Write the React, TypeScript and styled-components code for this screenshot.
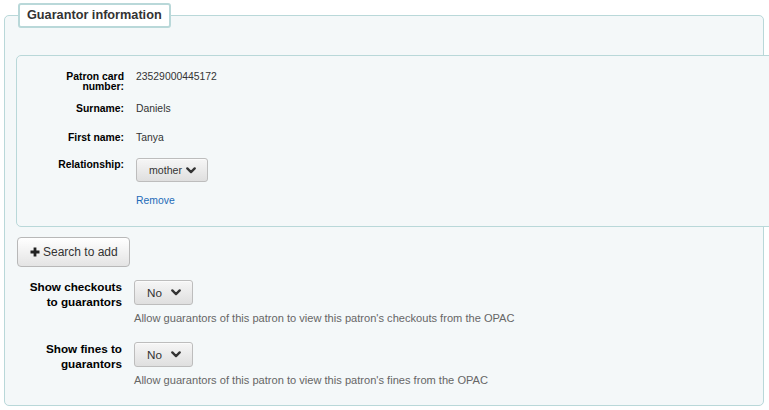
import React from "react";
import styled, { createGlobalStyle } from "styled-components";

const GlobalStyle = createGlobalStyle`
  html, body {
    margin: 0;
    padding: 0;
    background: #ffffff;
    overflow-x: hidden;
  }
  body {
    font-family: "Liberation Sans", Arial, Helvetica, sans-serif;
    color: #000;
  }
`;

const Outer = styled.fieldset`
  margin: 3px 5px 0 4px;
  padding: 0 11px 18px 11px;
  border: 1px solid #b9d8d9;
  border-radius: 5px;
  background: #f4f8f9;
  min-inline-size: 0;
`;

const Legend = styled.legend`
  margin-left: 2px;
  padding: 2px 7px;
  border: 2px solid #b9d8d9;
  border-radius: 3px;
  background: #ffffff;
  font-size: 12.7px;
  line-height: 17px;
  font-weight: bold;
  color: #333;
`;

const Inner = styled.fieldset`
  margin: 27px 0 0 0;
  padding: 12px 0 16px 0;
  width: calc(100% + 30px);
  box-sizing: border-box;
  border: 1px solid #b9d8d9;
  border-radius: 5px;
  background: #f4f8f9;
`;

const InfoGrid = styled.div`
  display: grid;
  grid-template-columns: 107px 1fr;
  grid-template-rows: 32px 29px 27px auto;
  column-gap: 12px;
  font-size: 10.4px;
`;

const InfoLabel = styled.div`
  text-align: right;
  font-weight: bold;
  line-height: 10px;
  padding-top: 4px;
  color: #000;
`;

const InfoValue = styled.div`
  line-height: 18px;
  color: #333;
`;

const ValueStack = styled.div`
  display: flex;
  flex-direction: column;
  align-items: flex-start;
`;

const Select = styled.div<{ $w: number; $h: number; $fs: number; $mt?: number }>`
  display: inline-flex;
  align-items: center;
  justify-content: space-between;
  box-sizing: border-box;
  width: ${(p) => p.$w}px;
  height: ${(p) => p.$h}px;
  margin-top: ${(p) => p.$mt ?? 0}px;
  padding: 0 11px 0 12px;
  border: 1px solid #bdbdbd;
  border-radius: 3px;
  background: linear-gradient(#f6f6f6, #dfdfdf);
  color: #333;
  font-size: ${(p) => p.$fs}px;
  box-shadow: inset 0 1px 0 rgba(255, 255, 255, 0.6);
`;

const RemoveLink = styled.a`
  margin-top: 10px;
  line-height: 18px;
  color: #1e6bb8;
  text-decoration: none;
  font-size: 10.4px;
`;

const AddButton = styled.button`
  display: inline-flex;
  align-items: center;
  gap: 3px;
  box-sizing: border-box;
  height: 30px;
  margin: 10px 0 0 1px;
  padding: 0 11px 0 12px;
  border: 1px solid #b8b8b8;
  border-radius: 4px;
  background: linear-gradient(#ffffff, #e4e4e4);
  font-family: "Liberation Sans", Arial, Helvetica, sans-serif;
  font-size: 12px;
  color: #333;
`;

const Settings = styled.div`
  display: grid;
  grid-template-columns: 106px 1fr;
  column-gap: 12px;
  row-gap: 17px;
  margin-top: 13px;
`;

const SettingLabel = styled.div`
  text-align: right;
  font-weight: bold;
  font-size: 11.7px;
  line-height: 14.5px;
  color: #000;
`;

const Hint = styled.div`
  margin-top: 6px;
  font-size: 11.1px;
  line-height: 14px;
  color: #666;
`;

const Chevron = () => (
  <svg width="10" height="7" viewBox="0 0 10 7" aria-hidden="true">
    <path
      d="M1.3 1.4 L5 5.1 L8.7 1.4"
      fill="none"
      stroke="#333"
      strokeWidth="2.3"
      strokeLinecap="round"
      strokeLinejoin="round"
    />
  </svg>
);

const Plus = () => (
  <svg width="10" height="10" viewBox="0 0 10 10" aria-hidden="true">
    <path
      d="M3.6 0.6h2.8v9H3.6z M0.5 3.6h9v2.8h-9z"
      fill="#222"
    />
  </svg>
);

export default function App() {
  return (
    <>
      <GlobalStyle />
      <Outer>
        <Legend>Guarantor information</Legend>
        <Inner>
          <InfoGrid>
            <InfoLabel>
              Patron card
              <br />
              number:
            </InfoLabel>
            <InfoValue>23529000445172</InfoValue>
            <InfoLabel>Surname:</InfoLabel>
            <InfoValue>Daniels</InfoValue>
            <InfoLabel>First name:</InfoLabel>
            <InfoValue>Tanya</InfoValue>
            <InfoLabel>Relationship:</InfoLabel>
            <ValueStack>
              <Select $w={72} $h={24} $fs={10.6} $mt={2}>
                <span>mother</span>
                <Chevron />
              </Select>
              <RemoveLink href="#">Remove</RemoveLink>
            </ValueStack>
          </InfoGrid>
        </Inner>
        <AddButton type="button">
          <Plus />
          Search to add
        </AddButton>
        <Settings>
          <SettingLabel>
            Show checkouts
            <br />
            to guarantors
          </SettingLabel>
          <ValueStack>
            <Select $w={59} $h={25} $fs={11.7}>
              <span>No</span>
              <Chevron />
            </Select>
            <Hint>
              Allow guarantors of this patron to view this patron's checkouts
              from the OPAC
            </Hint>
          </ValueStack>
          <SettingLabel>
            Show fines to
            <br />
            guarantors
          </SettingLabel>
          <ValueStack>
            <Select $w={59} $h={25} $fs={11.7}>
              <span>No</span>
              <Chevron />
            </Select>
            <Hint>
              Allow guarantors of this patron to view this patron's fines from
              the OPAC
            </Hint>
          </ValueStack>
        </Settings>
      </Outer>
    </>
  );
}
